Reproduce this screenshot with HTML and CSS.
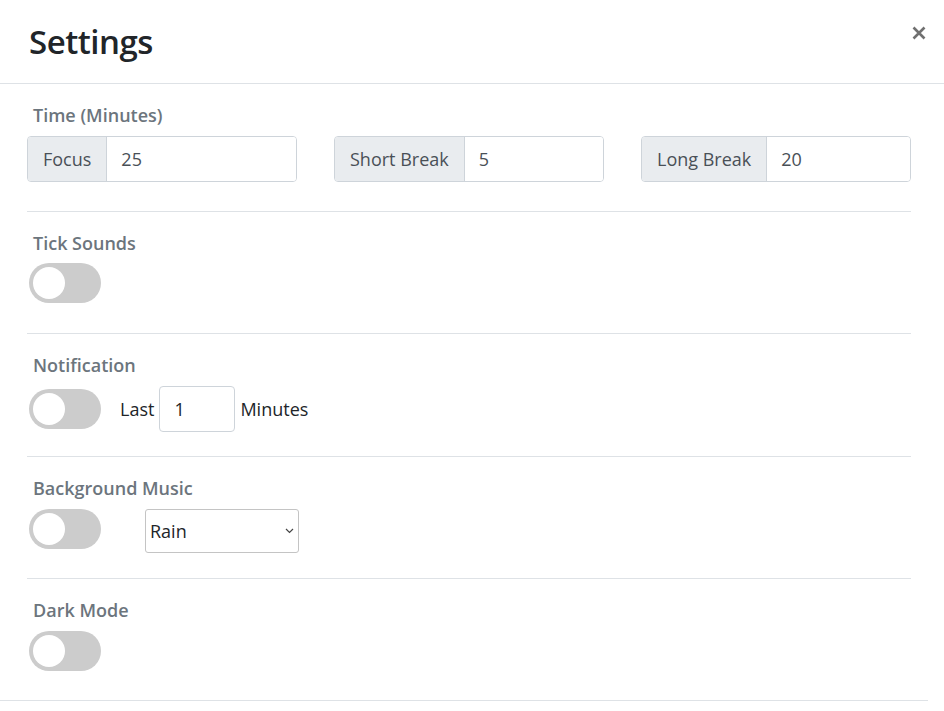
FILE: index.html
```html
<!DOCTYPE html>
<html lang="en">
<head>
<meta charset="utf-8">
<title>Settings</title>
<link rel="stylesheet" href="styles.css">
</head>
<body>
<div class="modal">
  <header class="modal-header">
    <h1 class="modal-title">Settings</h1>
    <button class="close" type="button" aria-label="Close">
      <svg width="14" height="14" viewBox="0 0 14 14"><path d="M1.5 1.5L12.5 12.5M12.5 1.5L1.5 12.5" stroke="#707070" stroke-width="2.6" stroke-linecap="butt"/></svg>
    </button>
  </header>
  <div class="modal-body">
    <section class="section sec-time">
      <div class="label">Time (Minutes)</div>
      <div class="time-grid">
        <div class="input-group"><span class="addon">Focus</span><input class="field" value="25"></div>
        <div class="input-group"><span class="addon">Short Break</span><input class="field" value="5"></div>
        <div class="input-group"><span class="addon">Long Break</span><input class="field" value="20"></div>
      </div>
    </section>
    <section class="section sec-tick">
      <div class="label">Tick Sounds</div>
      <div class="row"><span class="switch"><span class="knob"></span></span></div>
    </section>
    <section class="section sec-notify">
      <div class="label">Notification</div>
      <div class="row row-notify">
        <span class="switch"><span class="knob"></span></span>
        <span class="text last">Last</span>
        <input class="small-input" value="1">
        <span class="text minutes">Minutes</span>
      </div>
    </section>
    <section class="section sec-music">
      <div class="label">Background Music</div>
      <div class="row row-music">
        <span class="switch"><span class="knob"></span></span>
        <span class="select-wrap">
          <select class="select"><option>Rain</option></select>
          <svg class="chevron" width="9" height="6" viewBox="0 0 9 6"><path d="M1 1L4.5 4.5L8 1" fill="none" stroke="#444" stroke-width="1.2"/></svg>
        </span>
      </div>
    </section>
    <section class="section sec-dark">
      <div class="label">Dark Mode</div>
      <div class="row"><span class="switch"><span class="knob"></span></span></div>
    </section>
  </div>
  <footer class="modal-footer"></footer>
</div>
</body>
</html>
```
FILE: styles.css
```css
* { box-sizing: border-box; }
html, body { margin: 0; padding: 0; background: #fff; }
body {
  font-family: "Open Sans", "Noto Sans", Arial, sans-serif;
  color: #212529;
  width: 944px;
  height: 711px;
  overflow: hidden;
}
.modal { width: 944px; }
.modal-header {
  height: 84px;
  border-bottom: 1px solid #dee2e6;
  display: flex;
  align-items: flex-start;
  justify-content: space-between;
  padding: 0 0 0 29px;
}
.modal-title {
  margin: 0;
  font-size: 33px;
  font-weight: 600;
  line-height: 40px;
  padding-top: 22px;
  color: #212529;
  letter-spacing: -0.5px;
}
.close {
  border: 0;
  background: transparent;
  padding: 0;
  margin: 26px 18px 0 0;
  width: 14px;
  height: 14px;
  display: flex;
  cursor: pointer;
}
.modal-body { padding: 0 33px 0 27px; }
.section {
  padding: 18px 0 30px;
  border-bottom: 1px solid #dee2e6;
}
.label {
  font-size: 18px;
  font-weight: 600;
  color: #6c757d;
  line-height: 27px;
  padding-left: 6px;
  margin-bottom: 7px;
}
.sec-time { padding-bottom: 29px; }
.sec-tick .label { margin-bottom: 6px; }
.sec-tick { padding-bottom: 30px; }
.sec-notify { padding-bottom: 24px; }
.sec-music { padding-bottom: 25px; }
.sec-dark { padding-bottom: 29px; border-bottom: 0; }
.time-grid {
  display: grid;
  grid-template-columns: repeat(3, 270px);
  justify-content: space-between;
}
.input-group {
  display: flex;
  height: 46px;
  border: 1px solid #ced4da;
  border-radius: 4px;
  overflow: hidden;
}
.addon {
  display: flex;
  align-items: center;
  padding: 0 15px;
  background: #e9ecef;
  border-right: 1px solid #ced4da;
  color: #495057;
  font-size: 18px;
  white-space: nowrap;
}
.field {
  flex: 1;
  min-width: 0;
  border: 0;
  padding: 0 14px;
  font: inherit;
  font-size: 18px;
  color: #495057;
  outline: none;
}
.row {
  display: flex;
  align-items: center;
  height: 40px;
  padding-left: 2px;
}
.row-notify { height: 46px; }
.row-music { height: 44px; align-items: flex-start; }
.switch {
  flex: none;
  width: 72px;
  height: 40px;
  border-radius: 20px;
  background: #cccccc;
  display: flex;
  align-items: center;
  padding-left: 4px;
}
.knob {
  width: 32px;
  height: 32px;
  border-radius: 50%;
  background: #fff;
}
.text { font-size: 18px; color: #212529; }
.last { margin-left: 19px; margin-right: 5px; }
.minutes { margin-left: 5px; }
.small-input {
  flex: none;
  width: 76px;
  height: 46px;
  border: 1px solid #ced4da;
  border-radius: 4px;
  padding: 0 14px;
  font: inherit;
  font-size: 18px;
  color: #212529;
  outline: none;
}
.select-wrap {
  position: relative;
  margin-left: 44px;
  display: flex;
}
.select {
  -webkit-appearance: none;
  appearance: none;
  width: 154px;
  height: 44px;
  border: 1px solid #c4c4c4;
  border-radius: 3px;
  background: #fff;
  padding: 0 4px;
  font: inherit;
  font-size: 18px;
  color: #212529;
  outline: none;
}
.chevron {
  position: absolute;
  right: 5px;
  top: 19px;
}
.modal-footer {
  width: 928px;
  border-top: 1px solid #dee2e6;
}
```
